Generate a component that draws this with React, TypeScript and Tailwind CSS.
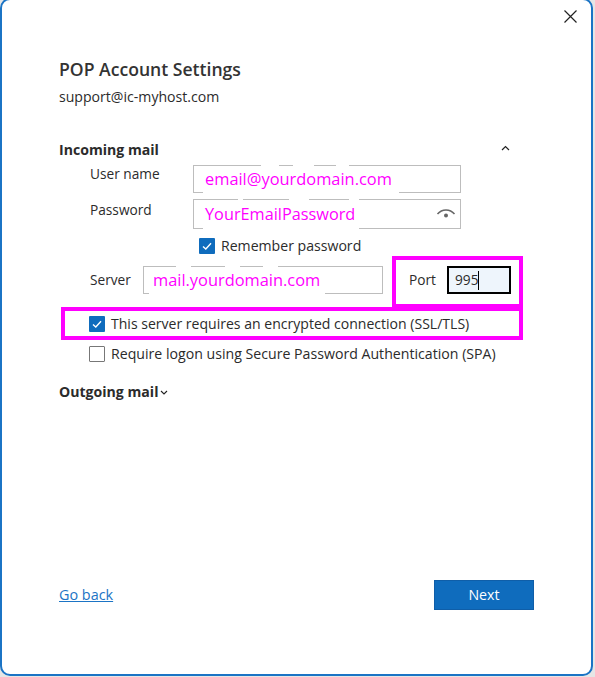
import React from "react";

const font = { fontFamily: '"Open Sans", "Noto Sans", sans-serif' };

function Check({ checked }: { checked: boolean }) {
  return checked ? (
    <span className="flex h-[16px] w-[16px] shrink-0 items-center justify-center rounded-[1px] bg-[#0f6cbd]">
      <svg width="12" height="12" viewBox="0 0 12 12" fill="none">
        <path d="M2 6.5 L4.8 9 L10 3.2" stroke="white" strokeWidth="1.4" />
      </svg>
    </span>
  ) : (
    <span className="h-[16px] w-[16px] shrink-0 rounded-[1px] border border-[#777777] bg-white" />
  );
}

/* White retouching marks where the screenshot's text was painted over the field border. */
function Erase({ spans, bottom }: { spans: [number, number][]; bottom?: boolean }) {
  return (
    <>
      {spans.map(([a, b]) => (
        <span
          key={a}
          className={bottom ? "absolute bottom-[-1px] h-px bg-white" : "absolute top-[-1px] h-px bg-white"}
          style={{ left: a, width: b - a }}
        />
      ))}
    </>
  );
}

export default function App() {
  return (
    <div className="h-[677px] w-[595px] overflow-hidden bg-[#e6e6e6]" style={font}>
      <div className="relative -mt-[2px] flex h-[678px] w-[593px] flex-col rounded-[10px] border-2 border-[#1b74c5] bg-white pl-[57px] text-[#2b2b2b]">
        <svg className="absolute right-[13px] top-[9px]" width="15" height="15" viewBox="0 0 15 15" fill="none">
          <path d="M1.5 1.5 L13.5 13.5 M13.5 1.5 L1.5 13.5" stroke="#222222" strokeWidth="1.2" />
        </svg>

        <h1 className="mt-[57px] h-[24px] text-[17.6px] font-semibold leading-[24px] text-[#333333]">POP Account Settings</h1>
        <p className="mt-[6px] h-[20px] text-[14.1px] leading-[20px]">support@ic-myhost.com</p>

        <div className="mt-[33px] flex h-[20px] w-[451px] items-center justify-between">
          <span className="text-[14.1px] font-bold leading-[20px]">Incoming mail</span>
          <svg width="9" height="6" viewBox="0 0 9 6" fill="none" className="mb-[4px]">
            <path d="M1 5 L4.5 1.5 L8 5" stroke="#222222" strokeWidth="1.2" />
          </svg>
        </div>

        <div className="mt-[5px] flex h-[28px] items-start">
          <span className="ml-[31px] w-[103px] text-[13.7px] leading-[18px]">User name</span>
          <div className="relative flex h-[28px] w-[268px] items-center border border-[#bdbdbd] pl-[11px] text-[16.4px] text-[#ff00ff]">
            email@yourdomain.com
            <Erase spans={[[67, 85], [99, 120], [142, 155]]} />
            <Erase bottom spans={[[9, 205]]} />
          </div>
        </div>

        <div className="mt-[6px] flex h-[30px] items-start">
          <span className="ml-[31px] mt-px w-[103px] text-[13.7px] leading-[20px]">Password</span>
          <div className="relative flex h-[30px] w-[268px] items-center justify-between border border-[#bdbdbd] pl-[11px] pr-[4px] text-[16.3px] text-[#ff00ff]">
            <span>YourEmailPassword</span>
            <svg width="20" height="12" viewBox="0 0 20 12" fill="none">
              <path d="M1.5 6 C6 0.5 14 0.5 18.5 6" stroke="#666666" strokeWidth="1.5" />
              <circle cx="10" cy="7.5" r="2" fill="#666666" />
            </svg>
            <Erase spans={[[44, 49], [95, 115], [155, 165]]} />
            <Erase bottom spans={[[9, 165]]} />
          </div>
        </div>

        <div className="ml-[140px] mt-[8px] flex h-[18px] items-center gap-[6px]">
          <Check checked />
          <span className="text-[14.1px] leading-[18px]">Remember password</span>
        </div>

        <div className="mt-[11px] flex h-[28px] items-center">
          <span className="ml-[31px] w-[53px] text-[13.7px]">Server</span>
          <div className="relative flex h-[28px] w-[240px] items-center border border-[#bdbdbd] pl-[9px] text-[16.4px] text-[#ff00ff]">
            mail.yourdomain.com
            <Erase spans={[[32, 47], [81, 96], [119, 134]]} />
            <Erase bottom spans={[[5, 181]]} />
          </div>
          <span className="ml-[26px] w-[38px] text-[13.7px]">Port</span>
          <div className="flex h-[28px] w-[64px] items-center border-2 border-black bg-[#eef5fc] pl-[6px] text-[13.7px]">
            <span>995</span>
            <span className="h-[19px] w-px bg-black" />
          </div>
        </div>

        <div className="ml-[30px] mt-[21px] flex h-[18px] items-center gap-[6px]">
          <Check checked />
          <span className="text-[14.05px] leading-[18px]">This server requires an encrypted connection (SSL/TLS)</span>
        </div>

        <div className="ml-[30px] mt-[12px] flex h-[18px] items-center gap-[6px]">
          <Check checked={false} />
          <span className="text-[14.15px] leading-[18px]">Require logon using Secure Password Authentication (SPA)</span>
        </div>

        <div className="mt-[19px] flex h-[20px] items-center gap-[2px]">
          <span className="text-[14.1px] font-bold leading-[20px]">Outgoing mail</span>
          <svg width="8" height="5" viewBox="0 0 8 5" fill="none" className="mt-[1px]">
            <path d="M1 1 L4 4 L7 1" stroke="#222222" strokeWidth="1.1" />
          </svg>
        </div>

        <div className="mt-[178px] flex w-[475px] items-center justify-between">
          <a className="text-[14.4px] leading-[20px] text-[#1b74c5] underline">Go back</a>
          <button className="h-[30px] w-[100px] border border-[#0f5ea8] bg-[#0f6cbd] text-[14.2px] text-white">Next</button>
        </div>

        <div className="pointer-events-none absolute left-[390px] top-[256px] h-[52px] w-[131px] border-[4px] border-[#ff00ff]" />
        <div className="pointer-events-none absolute left-[59px] top-[307px] h-[33px] w-[462px] border-[4px] border-[#ff00ff]" />
      </div>
    </div>
  );
}
